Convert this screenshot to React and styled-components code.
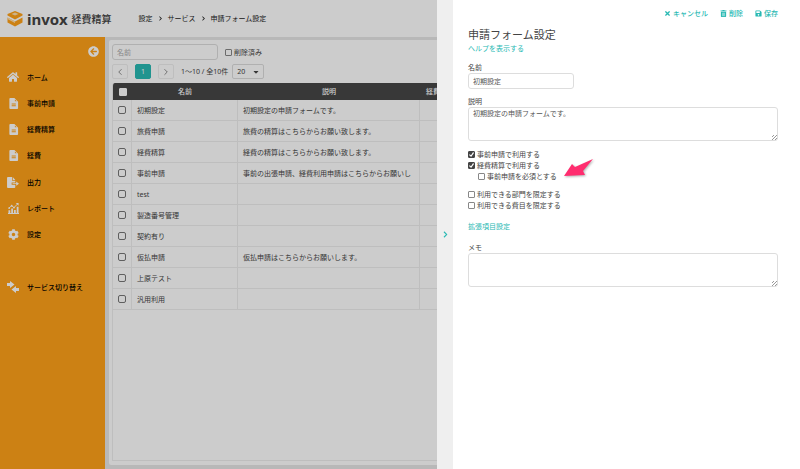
import styled, { createGlobalStyle } from "styled-components"
import { FaHome, FaCog, FaTimes, FaTrashAlt, FaSave, FaArrowCircleLeft, FaChevronRight, FaCaretDown } from "react-icons/fa"
import { FiChevronLeft, FiChevronRight } from "react-icons/fi"

const rows = [
    { name: "初期設定", desc: "初期設定の申請フォームです。" },
    { name: "旅費申請", desc: "旅費の精算はこちらからお願い致します。" },
    { name: "経費精算", desc: "経費の精算はこちらからお願い致します。" },
    { name: "事前申請", desc: "事前の出張申請、経費利用申請はこちらからお願いし" },
    { name: "test", desc: "" },
    { name: "製造番号管理", desc: "" },
    { name: "契約有り", desc: "" },
    { name: "仮払申請", desc: "仮払申請はこちらからお願いします。" },
    { name: "上原テスト", desc: "" },
    { name: "汎用利用", desc: "" },
]

const FileIcon = () => (
    <svg viewBox="0 0 24 24" width="11" height="11" fill="currentColor" aria-hidden="true">
        <path fillRule="evenodd" d="M5 0h9l8 8v14a2 2 0 0 1-2 2H5a2 2 0 0 1-2-2V2a2 2 0 0 1 2-2zM8 12v2h9v-2zM8 16v2h9v-2zM15 3v4h4z" />
    </svg>
)

const ExportIcon = () => (
    <svg viewBox="0 0 26 24" width="12" height="11" fill="currentColor" aria-hidden="true">
        <path d="M2 0h9v8h7v4h-8v5h8v5a2 2 0 0 1-2 2H2a2 2 0 0 1-2-2V2a2 2 0 0 1 2-2z" />
        <path d="M12.500 0L18 6.500h-5.500zM12 13.500h8V10l6 4.500-6 4.500v-3.500h-8z" />
    </svg>
)

const ReportIcon = () => (
    <svg viewBox="0 0 24 24" width="11" height="11" aria-hidden="true">
        <path fill="currentColor" d="M1 16h4v6H1zM7 12h4v10H7zM13 15h4v7h-4zM19 8h4v14h-4zM0 22h24v2H0z" />
        <path fill="none" stroke="currentColor" strokeWidth="2" d="M2 11l6-5 5 4 8-8" />
        <path fill="currentColor" d="M17 0h6v6z" />
        <circle cx="2.500" cy="11" r="2" fill="currentColor" />
        <circle cx="8" cy="6" r="2" fill="currentColor" />
        <circle cx="13" cy="10" r="2" fill="currentColor" />
    </svg>
)

const SwitchIcon = () => (
    <svg viewBox="0 0 24 24" width="12" height="12" fill="currentColor" aria-hidden="true">
        <path d="M0 4h6V0l9 7-9 7v-4H0z" />
        <path d="M24 20h-6v4l-9-7 9-7v4h6z" />
    </svg>
)

const LogoMark = () => (
    <svg viewBox="0 0 32 32" width="16" height="16" aria-hidden="true">
        <path fill="#ffa219" d="M16 0l15 6v3l-15 8L1 9V6z" />
        <path fill="#ffe0ae" d="M9 6l7-3 7 3-7 3z" />
        <path fill="#ffa219" d="M1 13l15 8 15-8v10l-15 8-15-8z" />
        <path fill="#ffe0ae" d="M1 13l15 8v3L1 16z" />
    </svg>
)

const menus = [
    { label: "ホーム", icon: <FaHome size={12} /> },
    { label: "事前申請", icon: <FileIcon /> },
    { label: "経費精算", icon: <FileIcon /> },
    { label: "経費", icon: <FileIcon /> },
    { label: "出力", icon: <ExportIcon /> },
    { label: "レポート", icon: <ReportIcon /> },
    { label: "設定", icon: <FaCog size={11} /> },
]

const App = () => {
    return (
        <>
            <GlobalStyle />
            <Page>
                <Header>
                    <Logo>
                        <LogoMark />
                        <LogoName>invox</LogoName>
                        <LogoSub>経費精算</LogoSub>
                    </Logo>
                    <Breadcrumb aria-label="パンくず">
                        <span>設定</span>
                        <FaChevronRight size={5} />
                        <span>サービス</span>
                        <FaChevronRight size={5} />
                        <span>申請フォーム設定</span>
                    </Breadcrumb>
                </Header>
                <Body>
                    <Sidebar>
                        <FoldButton type="button" aria-label="メニューを閉じる">
                            <FaArrowCircleLeft size={11} />
                        </FoldButton>
                        <MenuList>
                            {menus.map((menu) => (
                                <MenuLink href="#" key={menu.label}>
                                    <MenuIcon>{menu.icon}</MenuIcon>
                                    {menu.label}
                                </MenuLink>
                            ))}
                        </MenuList>
                        <MenuLink href="#">
                            <MenuIcon><SwitchIcon /></MenuIcon>
                            サービス切り替え
                        </MenuLink>
                    </Sidebar>
                    <Main>
                        <Card>
                            <Filter>
                                <TextInput placeholder="名前" aria-label="名前" />
                                <CheckLabel>
                                    <Check type="checkbox" />
                                    削除済み
                                </CheckLabel>
                            </Filter>
                            <Pager>
                                <PageButton type="button" aria-label="前へ"><FiChevronLeft size={10} /></PageButton>
                                <PageButton type="button" $active>1</PageButton>
                                <PageButton type="button" aria-label="次へ"><FiChevronRight size={10} /></PageButton>
                                <PageInfo>
                                    <span>1〜10 / 全10件</span>
                                    <SelectWrap>
                                        <PageSize aria-label="表示件数" defaultValue="20">
                                            <option>20</option>
                                        </PageSize>
                                        <FaCaretDown size={8} />
                                    </SelectWrap>
                                </PageInfo>
                            </Pager>
                            <TableBox>
                                <Table>
                                    <colgroup>
                                        <Col $w={19} />
                                        <Col $w={106} />
                                        <Col $w={182} />
                                        <col />
                                    </colgroup>
                                    <thead>
                                        <tr>
                                            <Th><RowCheck type="checkbox" aria-label="すべて選択" $solid /></Th>
                                            <Th>名前</Th>
                                            <Th>説明</Th>
                                            <Th $left>経費</Th>
                                        </tr>
                                    </thead>
                                    <tbody>
                                        {rows.map((row) => (
                                            <tr key={row.name}>
                                                <Td $center><RowCheck type="checkbox" aria-label={row.name} /></Td>
                                                <Td>{row.name}</Td>
                                                <Td>{row.desc}</Td>
                                                <Td />
                                            </tr>
                                        ))}
                                    </tbody>
                                </Table>
                            </TableBox>
                        </Card>
                    </Main>
                </Body>
            </Page>
            <Overlay />
            <Drawer>
                <Handle type="button" aria-label="パネルを閉じる">
                    <FaChevronRight size={7} />
                </Handle>
                <Panel>
                    <Actions>
                        <ActionButton type="button"><FaTimes size={7} />キャンセル</ActionButton>
                        <ActionButton type="button"><FaTrashAlt size={7} />削除</ActionButton>
                        <ActionButton type="button"><FaSave size={7} />保存</ActionButton>
                    </Actions>
                    <Title>申請フォーム設定</Title>
                    <TextLink href="#">ヘルプを表示する</TextLink>
                    <Field>
                        <label htmlFor="form-name">名前</label>
                        <TextInput id="form-name" defaultValue="初期設定" />
                    </Field>
                    <Field>
                        <label htmlFor="form-desc">説明</label>
                        <TextArea id="form-desc" defaultValue="初期設定の申請フォームです。" />
                    </Field>
                    <CheckGroup>
                        <CheckLabel><Check type="checkbox" defaultChecked />事前申請で利用する</CheckLabel>
                        <CheckLabel><Check type="checkbox" defaultChecked />経費精算で利用する</CheckLabel>
                        <CheckLabel $indent>
                            <Check type="checkbox" />事前申請を必須とする
                            <Arrow viewBox="0 0 32 20" aria-hidden="true">
                                <path d="M1 18L9 6l3 3L30 1 20 13l2 4z" />
                            </Arrow>
                        </CheckLabel>
                    </CheckGroup>
                    <CheckGroup>
                        <CheckLabel><Check type="checkbox" />利用できる部門を限定する</CheckLabel>
                        <CheckLabel><Check type="checkbox" />利用できる費目を限定する</CheckLabel>
                    </CheckGroup>
                    <Section>
                        <TextLink href="#">拡張項目設定</TextLink>
                    </Section>
                    <Section>
                        <label htmlFor="form-memo">メモ</label>
                        <TextArea id="form-memo" />
                    </Section>
                </Panel>
            </Drawer>
        </>
    )
}

const GlobalStyle = createGlobalStyle`
    * {
        box-sizing: border-box;
    }
    body {
        margin: 0;
        color: #444;
        font-family: "Noto Sans", "Noto Sans CJK JP", sans-serif;
        font-size: 7px;
        line-height: 11px;
    }
    button, input, select, textarea {
        margin: 0;
        font: inherit;
        color: inherit;
    }
    a {
        text-decoration: none;
    }
    svg {
        flex-shrink: 0;
    }
`

const Page = styled.div`
    height: 100vh;
    display: flex;
    flex-direction: column;
    overflow: hidden;
`

const Header = styled.header`
    height: 37px;
    flex-shrink: 0;
    display: flex;
    align-items: center;
    gap: 27px;
    padding-left: 7px;
    background: #fff;
`

const Logo = styled.div`
    display: flex;
    align-items: center;
    gap: 4px;
`

const LogoName = styled.span`
    font-family: "Noto Sans", sans-serif;
    font-size: 15px;
    font-weight: 700;
    line-height: 16px;
`

const LogoSub = styled.span`
    font-size: 10px;
    font-weight: 500;
    line-height: 16px;
`

const Breadcrumb = styled.nav`
    display: flex;
    align-items: center;
    gap: 5px;
    color: #222;
`

const Body = styled.div`
    flex: 1;
    min-height: 0;
    display: flex;
`

const Sidebar = styled.nav`
    width: 105px;
    flex-shrink: 0;
    display: flex;
    flex-direction: column;
    background: #ffa219;
`

const FoldButton = styled.button`
    align-self: flex-end;
    display: flex;
    margin: 9px 6px 7px;
    padding: 0;
    border: none;
    background: none;
    color: #fff;
`

const MenuList = styled.div`
    height: 184px;
    display: flex;
    flex-direction: column;
    justify-content: space-between;
    margin-bottom: 26px;
`

const MenuLink = styled.a`
    height: 26px;
    display: flex;
    align-items: center;
    gap: 8px;
    padding-left: 7px;
    color: #000;
    font-weight: 500;
`

const MenuIcon = styled.span`
    width: 12px;
    display: flex;
    justify-content: center;
    color: #fff;
`

const Main = styled.main`
    flex: 1;
    min-width: 0;
    display: flex;
    padding: 3px 4px 4px;
    background: #e6e6e6;
`

const Card = styled.section`
    flex: 1;
    min-width: 0;
    display: flex;
    flex-direction: column;
    gap: 4px;
    padding: 4px 3px;
    border-radius: 2px;
    background: #fff;
`

const Filter = styled.div`
    display: flex;
    align-items: center;
    gap: 7px;
`

const TextInput = styled.input`
    width: 106px;
    height: 16px;
    padding: 0 4px;
    border: 1px solid #ddd;
    border-radius: 3px;
    background: #fff;
    color: #555;
    &::placeholder {
        color: #aaa;
    }
`

const CheckLabel = styled.label`
    position: relative;
    display: flex;
    align-items: center;
    gap: 2px;
    margin-left: ${(props) => (props.$indent ? "10px" : "0")};
`

const Check = styled.input`
    appearance: none;
    width: 7px;
    height: 7px;
    flex-shrink: 0;
    display: grid;
    place-items: center;
    border: 1px solid #888;
    border-radius: 1px;
    background: #fff;
    &:checked {
        border-color: #444;
        background: #444;
    }
    &:checked::before {
        content: "";
        width: 5px;
        height: 5px;
        background: #fff;
        clip-path: polygon(14% 44%, 0 62%, 42% 100%, 100% 18%, 82% 0, 40% 64%);
    }
`

const Pager = styled.div`
    display: flex;
    align-items: center;
    gap: 7px;
`

const PageButton = styled.button`
    width: 16px;
    height: 15px;
    display: flex;
    align-items: center;
    justify-content: center;
    padding: 0;
    border: 1px solid ${(props) => (props.$active ? "#28b9b3" : "#eee")};
    border-radius: 2px;
    background: ${(props) => (props.$active ? "#28b9b3" : "#fff")};
    color: ${(props) => (props.$active ? "#fff" : "#777")};
`

const PageInfo = styled.div`
    display: flex;
    align-items: center;
    gap: 4px;
    white-space: nowrap;
`

const SelectWrap = styled.div`
    position: relative;
    svg {
        position: absolute;
        top: 4px;
        right: 4px;
        pointer-events: none;
    }
`

const PageSize = styled.select`
    appearance: none;
    display: block;
    width: 32px;
    height: 15px;
    padding: 0 4px;
    border: 1px solid #ddd;
    border-radius: 2px;
    background: #fff;
`

const TableBox = styled.div`
    flex: 1;
    min-height: 0;
    overflow: hidden;
    border: 1px solid #eee;
    border-top: none;
    border-radius: 3px 3px 0 0;
`

const Table = styled.table`
    width: 100%;
    table-layout: fixed;
    border-collapse: separate;
    border-spacing: 0;
`

const Col = styled.col`
    width: ${(props) => props.$w}px;
`

const Th = styled.th`
    height: 17px;
    padding: ${(props) => (props.$left ? "0 6px" : "0")};
    background: #464646;
    color: #fff;
    font-weight: 500;
    text-align: ${(props) => (props.$left ? "left" : "center")};
`

const Td = styled.td`
    height: 21px;
    padding: ${(props) => (props.$center ? "0" : "0 0 0 5px")};
    border-right: 1px solid #eee;
    border-bottom: 1px solid #eee;
    text-align: ${(props) => (props.$center ? "center" : "left")};
    white-space: nowrap;
    overflow: hidden;
`

const RowCheck = styled.input`
    appearance: none;
    display: block;
    width: 8px;
    height: 8px;
    margin: 0 auto;
    border: 1px solid ${(props) => (props.$solid ? "#fff" : "#777")};
    border-radius: ${(props) => (props.$solid ? "1px" : "2px")};
    background: #fff;
`

const Overlay = styled.div`
    position: fixed;
    inset: 0;
    background: rgba(0, 0, 0, 0.2);
`

const Drawer = styled.aside`
    position: fixed;
    top: 0;
    right: 0;
    bottom: 0;
    width: max(363px, 45%);
    display: flex;
    background: #fff;
`

const Handle = styled.button`
    width: 16px;
    flex-shrink: 0;
    display: flex;
    align-items: center;
    justify-content: center;
    padding: 0;
    border: none;
    background: #efefef;
    color: #28b9b3;
`

const Panel = styled.div`
    flex: 1;
    min-width: 0;
    padding: 8px 22px 8px 15px;
    overflow: auto;
`

const Actions = styled.div`
    display: flex;
    justify-content: flex-end;
    gap: 12px;
`

const ActionButton = styled.button`
    display: flex;
    align-items: center;
    gap: 2px;
    padding: 0;
    border: none;
    background: none;
    color: #28b9b3;
    font-weight: 500;
`

const Title = styled.h1`
    margin: 8px 0 0;
    font-size: 11px;
    font-weight: 400;
    line-height: 16px;
`

const TextLink = styled.a`
    display: block;
    color: #28b9b3;
`

const Field = styled.div`
    display: flex;
    flex-direction: column;
    align-items: flex-start;
    margin-top: 7px;
    ${TextLink} + & {
        margin-top: 8px;
    }
`

const TextArea = styled.textarea`
    display: block;
    width: 100%;
    height: 34px;
    padding: 0 4px;
    border: 1px solid #ddd;
    border-radius: 3px;
    background: #fff;
    color: #555;
    resize: vertical;
    &::-webkit-resizer {
        background: repeating-linear-gradient(135deg, transparent 0 1px, #999 1px 2px) right bottom / 5px 5px no-repeat;
        clip-path: polygon(100% 60%, 100% 100%, 60% 100%);
    }
`

const CheckGroup = styled.div`
    display: flex;
    flex-direction: column;
    align-items: flex-start;
    margin-top: 8px;
    & + & {
        margin-top: 7px;
    }
`

const Arrow = styled.svg`
    position: absolute;
    left: calc(100% + 6px);
    bottom: 4px;
    width: 32px;
    height: 20px;
    fill: #ff2d6f;
    overflow: visible;
    filter: drop-shadow(1px 1px 1px rgba(0, 0, 0, 0.3));
`

const Section = styled.div`
    margin-top: 10px;
`

export default App
